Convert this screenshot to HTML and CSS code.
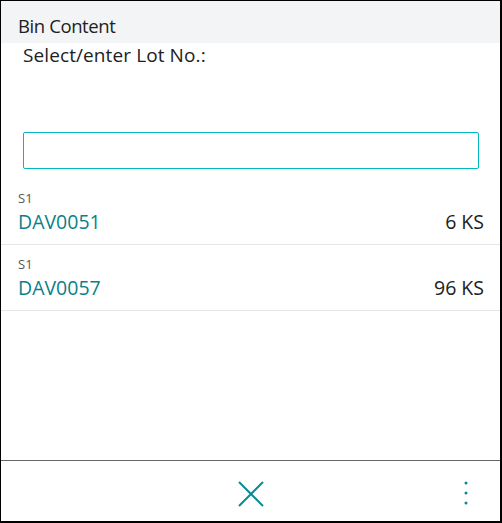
FILE: index.html
```html
<!DOCTYPE html>
<html lang="en">

<head>
  <meta charset="UTF-8">
  <meta name="viewport" content="width=device-width, initial-scale=1.0">
  <title>Bin Content</title>
  <link rel="stylesheet" href="styles.css">
</head>

<body>
  <div class="frame">
    <div class="header">Bin Content</div>

    <div class="prompt">
      <p class="prompt-label">Select/enter Lot No.:</p>
      <input class="lot-input" type="text">
    </div>

    <!-- Lot list -->
    <div class="list">
      <div class="row">
        <div class="row-bin">S1</div>
        <div class="row-main">
          <span class="row-lot">DAV0051</span>
          <span class="row-qty">6 KS</span>
        </div>
      </div>
      <div class="row">
        <div class="row-bin">S1</div>
        <div class="row-main">
          <span class="row-lot">DAV0057</span>
          <span class="row-qty">96 KS</span>
        </div>
      </div>
    </div>

    <div class="footer">
      <button class="icon-btn close-btn" title="Close">
        <svg width="26" height="26" viewBox="0 0 26 26">
          <path d="M1 1 L25 25 M25 1 L1 25" stroke="#0b8a95" stroke-width="2" fill="none"/>
        </svg>
      </button>
      <button class="icon-btn more-btn" title="More">
        <svg width="6" height="26" viewBox="0 0 6 26">
          <circle cx="3" cy="3" r="1.5" fill="#0b8a95"/>
          <circle cx="3" cy="13" r="1.5" fill="#0b8a95"/>
          <circle cx="3" cy="23" r="1.5" fill="#0b8a95"/>
        </svg>
      </button>
    </div>
  </div>
</body>

</html>
```

FILE: styles.css
```css
/* Page */
body {
  margin: 0;
  font-family: 'Open Sans', 'Noto Sans', sans-serif;
  color: #212121;
  background: #fff;
}

.frame {
  width: 502px;
  height: 523px;
  box-sizing: border-box;
  border: 1px solid #000;
  border-right-width: 2px;
  border-bottom-width: 2px;
  display: flex;
  flex-direction: column;
}

/* Header */
.header {
  height: 35px;
  padding: 7px 17px 0;
  background: #f3f4f6;
  font-size: 18.5px;
  line-height: 35px;
  letter-spacing: -0.4px;
}

/* Prompt + input */
.prompt {
  padding: 0 21px 0 22px;
}

.prompt-label {
  margin: 0;
  font-size: 19px;
  line-height: 24px;
  letter-spacing: 0.1px;
}

.lot-input {
  display: block;
  width: 100%;
  height: 37px;
  margin-top: 65px;
  box-sizing: border-box;
  border: 1px solid #00b7c3;
  border-radius: 2px;
  outline: none;
}

/* List */
.list {
  flex: 1;
  margin-top: 10px;
}

.row {
  padding: 11px 16px 9px 17px;
  border-bottom: 1px solid #e6e6e6;
}

.row-bin {
  font-size: 13px;
  line-height: 16px;
  color: #555;
}

.row-main {
  display: flex;
  justify-content: space-between;
  align-items: baseline;
  margin-top: 3px;
  font-size: 19.5px;
  line-height: 26px;
}

.row-lot {
  color: #0b7f8a;
}

/* Footer bar */
.footer {
  height: 60px;
  border-top: 1px solid #666;
  display: flex;
  align-items: center;
  justify-content: center;
  position: relative;
}

.icon-btn {
  background: none;
  border: none;
  padding: 0;
  cursor: pointer;
  display: flex;
}

.close-btn {
  margin-top: 6px;
}

.more-btn {
  position: absolute;
  right: 31px;
  top: 19px;
}
```
